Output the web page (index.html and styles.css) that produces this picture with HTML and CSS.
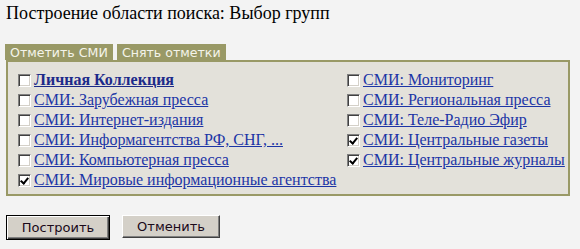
FILE: index.html
```html
<!DOCTYPE html>
<html lang="ru">
<head>
    <meta charset="UTF-8">
    <title>Построение области поиска</title>
    <link rel="stylesheet" href="styles.css">
</head>
<body>
    <div class="page-title">Построение области поиска: Выбор групп</div>

    <div class="tabs">
        <span class="tab">Отметить СМИ</span>
        <span class="tab">Снять отметки</span>
    </div>

    <div class="panel">
        <div class="col">
            <label class="item"><input type="checkbox"><a href="#" class="strong">Личная Коллекция</a></label>
            <label class="item"><input type="checkbox"><a href="#">СМИ: Зарубежная пресса</a></label>
            <label class="item"><input type="checkbox"><a href="#">СМИ: Интернет-издания</a></label>
            <label class="item"><input type="checkbox"><a href="#">СМИ: Информагентства РФ, СНГ, ...</a></label>
            <label class="item"><input type="checkbox"><a href="#">СМИ: Компьютерная пресса</a></label>
            <label class="item"><input type="checkbox" checked><a href="#">СМИ: Мировые информационные агентства</a></label>
        </div>
        <div class="col">
            <label class="item"><input type="checkbox"><a href="#">СМИ: Мониторинг</a></label>
            <label class="item"><input type="checkbox"><a href="#">СМИ: Региональная пресса</a></label>
            <label class="item"><input type="checkbox"><a href="#">СМИ: Теле-Радио Эфир</a></label>
            <label class="item"><input type="checkbox" checked><a href="#">СМИ: Центральные газеты</a></label>
            <label class="item"><input type="checkbox" checked><a href="#">СМИ: Центральные журналы</a></label>
        </div>
    </div>

    <div class="actions">
        <button class="btn default">Построить</button>
        <button class="btn">Отменить</button>
    </div>
</body>
</html>
```

FILE: styles.css
```css
body {
    background-color: #f3f3f3;
    margin: 0;
    padding: 3px 6px;
    font-family: "Liberation Serif", serif;
    color: black;
}
.page-title {
    font-size: 18px;
    line-height: 20px;
    height: 41px;
}
.tabs {
    display: flex;
    gap: 4px;
    margin-left: -1px;
}
.tab {
    background-color: #999966;
    color: #f4f4ea;
    font-family: "DejaVu Sans", sans-serif;
    font-size: 12.6px;
    padding: 1px 5px;
    height: 14px;
    line-height: 15px;
}
.panel {
    width: 564px;
    height: 136px;
    border: 2px solid #999966;
    background-color: #e3e1da;
    box-sizing: border-box;
    display: flex;
    padding: 8px 0 0 10px;
}
.col {
    display: flex;
    flex-direction: column;
}
.col:first-child {
    width: 329px;
}
.item {
    display: flex;
    align-items: center;
    height: 20px;
    font-size: 16px;
}
/* old windows style checkbox */
.item input {
    appearance: none;
    -webkit-appearance: none;
    margin: 0 3px 0 0;
    width: 13px;
    height: 13px;
    box-sizing: border-box;
    background-color: white;
    border: 1px solid;
    border-color: #808080 #ffffff #ffffff #808080;
    box-shadow: inset 1px 1px 0 #404040, inset -1px -1px 0 #d4d0c8;
    position: relative;
    flex-shrink: 0;
}
.item input:checked::after {
    content: "";
    position: absolute;
    left: 3px;
    top: 1px;
    width: 3px;
    height: 6px;
    border: solid black;
    border-width: 0 2px 2px 0;
    transform: rotate(40deg);
}
.item a {
    color: #1c35a6;
}
.item a.strong {
    font-weight: bold;
    color: #1c2a8a;
}
.actions {
    display: flex;
    align-items: flex-start;
    gap: 12px;
    margin-top: 19px;
}
.btn {
    font-family: "DejaVu Sans", sans-serif;
    font-size: 13px;
    color: #1a0a1a;
    background-color: #d4d0c8;
    border: 1px solid;
    border-color: #ffffff #404040 #404040 #ffffff;
    box-shadow: inset -1px -1px 0 #808080;
    width: 98px;
    height: 23px;
    padding: 0;
}
.btn.default {
    width: 104px;
    height: 25px;
    border-color: black;
    box-shadow: inset 1px 1px 0 #ffffff, inset -1px -1px 0 #404040, inset -2px -2px 0 #808080;
}
```
